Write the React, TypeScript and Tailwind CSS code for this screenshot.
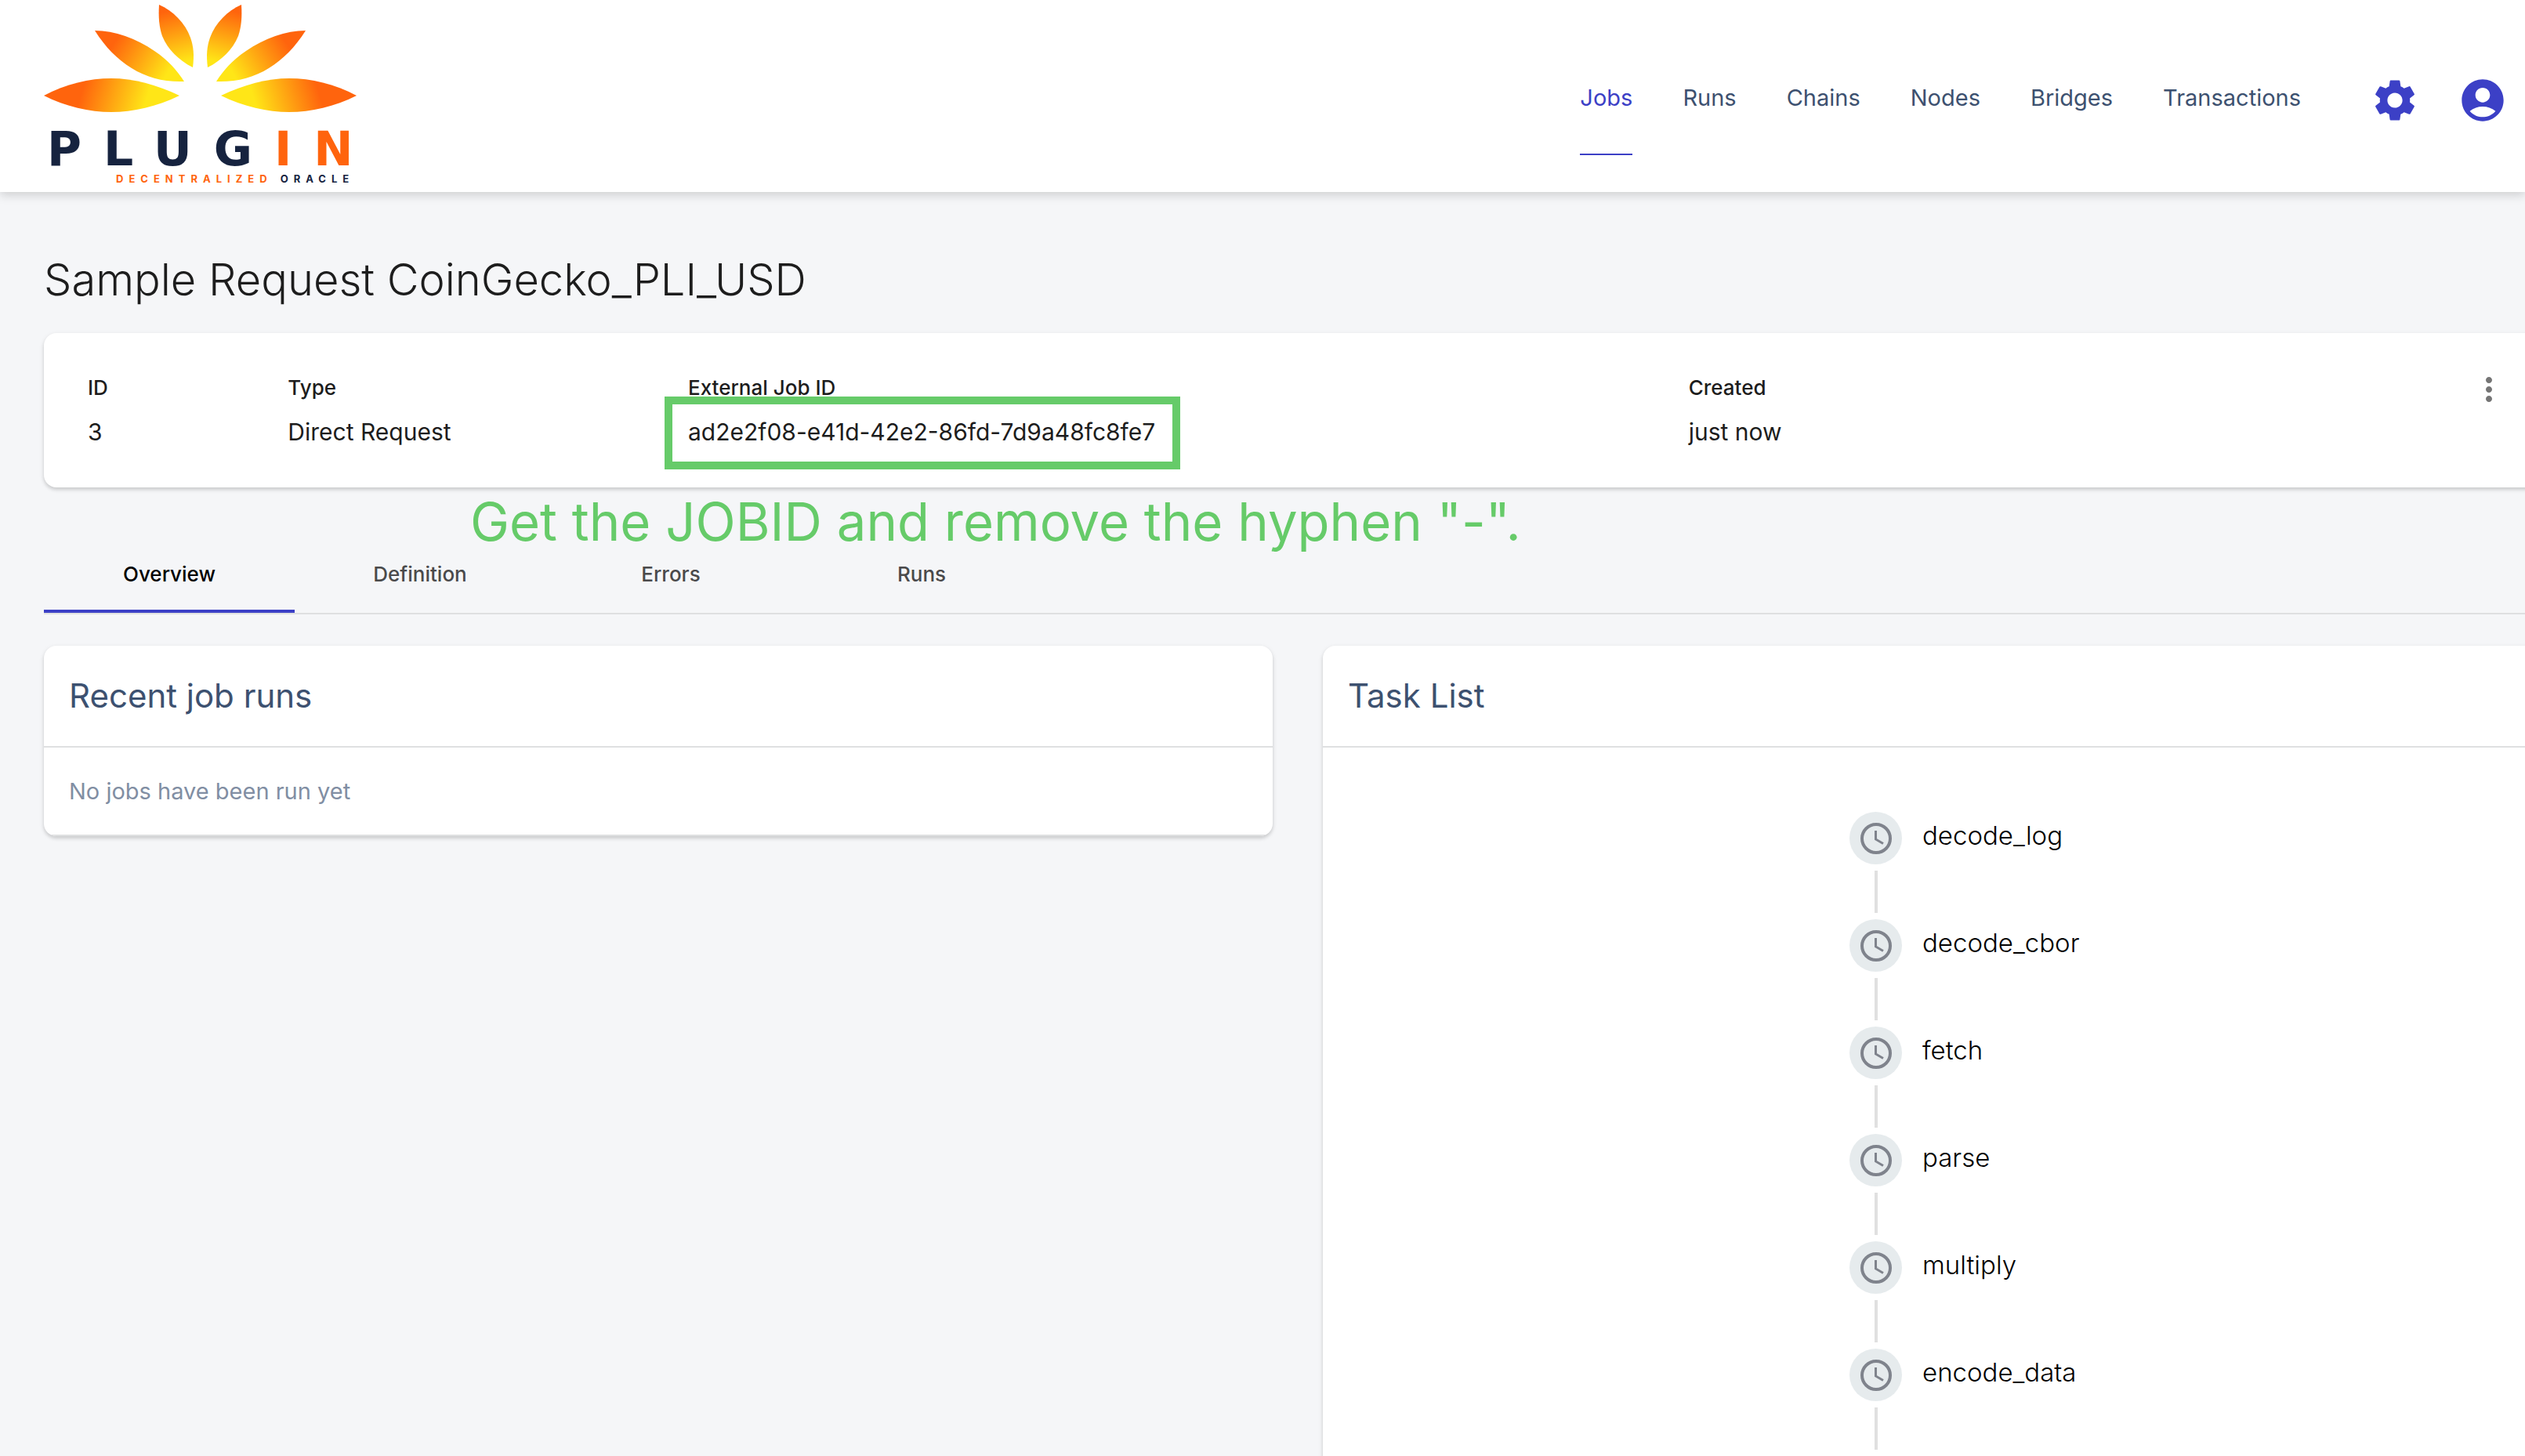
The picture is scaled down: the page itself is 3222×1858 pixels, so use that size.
import type { ReactNode } from "react";
import { MdAccountCircle, MdMoreVert, MdSettings } from "react-icons/md";

const navItems = ["Jobs", "Runs", "Chains", "Nodes", "Bridges", "Transactions"];
const tabs = ["Overview", "Definition", "Errors", "Runs"];
const tasks = ["decode_log", "decode_cbor", "fetch", "parse", "multiply", "encode_data"];

function Petals() {
  return (
    <svg viewBox="0 0 400 138" className="block h-[138px] w-[400px]" aria-hidden="true">
      <defs>
        <linearGradient id="side" gradientUnits="userSpaceOnUse" x1="50" y1="106" x2="128" y2="130">
          <stop offset="0" stopColor="#ff640d" />
          <stop offset="1" stopColor="#ffe617" />
        </linearGradient>
        <linearGradient id="middle" gradientUnits="userSpaceOnUse" x1="90" y1="48" x2="156" y2="90">
          <stop offset="0" stopColor="#ff640d" />
          <stop offset="1" stopColor="#ffe617" />
        </linearGradient>
        <linearGradient id="top" gradientUnits="userSpaceOnUse" x1="158" y1="8" x2="176" y2="74">
          <stop offset="0" stopColor="#ff640d" />
          <stop offset="1" stopColor="#ffe617" />
        </linearGradient>
        <g id="wing">
          <path fill="url(#side)" d="M0 116C28 101 58 94 86 94C114 94 144 102 173 116C144 130 114 137 86 137C58 137 28 130 0 116Z" />
          <path fill="url(#middle)" d="M65 33C90 33 118 43 141 59C159 71 170 84 179 98C154 99 131 93 112 81C93 69 79 55 65 33Z" />
          <path fill="url(#top)" d="M147 0C165 8 180 23 187 42C191 53 192 65 190 80C172 71 158 57 151 40C147 28 146 16 147 0Z" />
        </g>
      </defs>
      <use href="#wing" />
      <use href="#wing" transform="translate(399 0) scale(-1 1)" />
    </svg>
  );
}

function Logo() {
  return (
    <a href="#home" aria-label="Plugin Decentralized Oracle" className="flex w-[400px] shrink-0 flex-col">
      <Petals />
      <span className="mt-4 pl-1 font-['DejaVu_Sans'] text-[60px] leading-[60px] font-bold tracking-[28px] whitespace-nowrap text-[#16233f]">
        PLUG<span className="text-[#ff640d]">IN</span>
      </span>
      <span className="pl-[92px] text-[13px] leading-4 font-bold tracking-[7px] whitespace-nowrap text-[#ff640d]">
        DECENTRALIZED <span className="text-[#16233f]">ORACLE</span>
      </span>
    </a>
  );
}

function Header() {
  return (
    <header className="relative flex h-[245px] justify-between bg-white pt-[6px] pr-[22px] pl-14 shadow-[0_4px_12px_rgba(0,0,0,0.16)]">
      <Logo />
      <div className="flex items-start">
        <nav className="mr-[88px] flex gap-16">
          {navItems.map((item, i) => (
            <a
              key={item}
              href={"#" + item.toLowerCase()}
              className={
                i === 0
                  ? "h-48 border-b-2 border-[#3c40c6] pt-[99px] text-[29px] leading-10 text-[#3c40c6]"
                  : "h-48 pt-[99px] text-[29px] leading-10 text-[#3d5170]"
              }
            >
              {item}
            </a>
          ))}
        </nav>
        <div className="flex gap-12 pt-[90px] text-[#3c40c6]">
          <button type="button" aria-label="Settings">
            <MdSettings size={64} />
          </button>
          <button type="button" aria-label="Account">
            <MdAccountCircle size={64} />
          </button>
        </div>
      </div>
    </header>
  );
}

function Card({ className, children }: { className: string; children: ReactNode }) {
  return (
    <section
      className={
        "rounded-2xl bg-white shadow-[0_2px_6px_rgba(0,0,0,0.1),0_3px_4px_rgba(0,0,0,0.1)] " + className
      }
    >
      {children}
    </section>
  );
}

function Field({ label, className, children }: { label: string; className: string; children: ReactNode }) {
  return (
    <div className={className}>
      <dt className="text-[26px] leading-10 font-medium">{label}</dt>
      <dd className="mt-4 text-[30px] leading-10">{children}</dd>
    </div>
  );
}

function JobSummary() {
  return (
    <Card className="flex items-start px-14 pt-12 pb-[51px] text-[#1d1d1d]">
      <dl className="grid flex-1 grid-cols-12 pt-0.5">
        <Field label="ID" className="col-span-1">3</Field>
        <Field label="Type" className="col-span-2">Direct Request</Field>
        <Field label="External Job ID" className="col-span-5">
          <span className="relative">
            ad2e2f08-e41d-42e2-86fd-7d9a48fc8fe7
            <span className="absolute -top-[27px] -left-[30px] h-[93px] w-[658px] border-[10px] border-[#66cb69]" />
          </span>
        </Field>
        <Field label="Created" className="col-span-4">just now</Field>
      </dl>
      <button type="button" aria-label="Job actions" className="-ml-6 text-[#757575]">
        <MdMoreVert size={48} />
      </button>
    </Card>
  );
}

function Tabs() {
  return (
    <div role="tablist" className="relative mt-[66px] flex border-b-2 border-[#dfe0e1] text-[26px] leading-8 font-medium">
      {tabs.map((tab, i) => (
        <button
          key={tab}
          type="button"
          role="tab"
          aria-selected={i === 0}
          className={
            i === 0
              ? "h-[94px] w-80 border-b-4 border-[#3c40c6] text-black"
              : "h-[94px] w-80 border-b-4 border-transparent text-[#4a4a4b]"
          }
        >
          {tab}
        </button>
      ))}
      <p className="absolute bottom-20 left-[544px] text-[67px] leading-[72px] font-normal whitespace-nowrap text-[#66cb69]">
        Get the JOBID and remove the hyphen "-".
      </p>
    </div>
  );
}

function CardTitle({ children }: { children: ReactNode }) {
  return (
    <h2 className="border-b-2 border-[#dfe0e1] px-8 py-8 text-[42px] leading-16 text-[#3d5170]">{children}</h2>
  );
}

function Task({ name }: { name: string }) {
  return (
    <li className="flex h-[137px] items-start gap-6.5">
      <div className="flex flex-col items-center gap-2">
        <span className="flex size-[67px] items-center justify-center rounded-full bg-[#e6ebed]">
          <svg viewBox="0 0 40 40" className="size-10" fill="none" stroke="#7f838c" aria-hidden="true">
            <circle cx="20" cy="20" r="18" strokeWidth="4" />
            <path d="M19.500 10V21L29 26.500" strokeWidth="3" />
          </svg>
        </span>
        <span className="h-[54px] w-1 bg-[#e0e0e0]" />
      </div>
      <span className="pt-1.5 text-[33px] leading-12 font-light text-black">{name}</span>
    </li>
  );
}

export default function App() {
  return (
    <div className="h-screen overflow-hidden bg-[#f5f6f8] font-['Inter',sans-serif]">
      <Header />
      <main className="-mr-[34px] pl-14">
        <h1 className="pt-[72px] pb-7 text-[56px] leading-20 font-light text-[#1d1d1d]">
          Sample Request CoinGecko_PLI_USD
        </h1>
        <JobSummary />
        <Tabs />
        <div className="mt-10 grid grid-cols-2 items-start gap-16">
          <Card className="overflow-hidden">
            <CardTitle>Recent job runs</CardTitle>
            <p className="border-b-2 border-[#dfe0e1] px-8 pt-9 pb-[35px] text-[29px] leading-10 text-[#818ea3]">
              No jobs have been run yet
            </p>
          </Card>
          <Card className="">
            <CardTitle>Task List</CardTitle>
            <ul className="mx-auto w-56 pt-[82px] pb-20 whitespace-nowrap">
              {tasks.map((name) => (
                <Task key={name} name={name} />
              ))}
            </ul>
          </Card>
        </div>
      </main>
    </div>
  );
}
